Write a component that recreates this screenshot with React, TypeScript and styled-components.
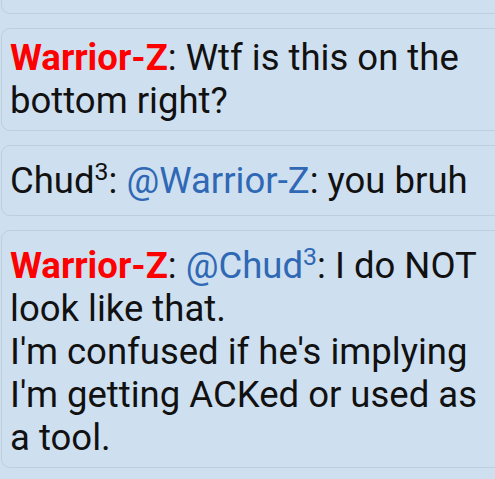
import React from 'react';
import styled, { createGlobalStyle } from 'styled-components';

const GlobalStyle = createGlobalStyle`
  html, body {
    margin: 0;
    padding: 0;
    background: #cedff0;
    overflow: hidden;
  }

  body {
    font-family: Roboto, 'Noto Sans', sans-serif;
  }
`;

const StyledChat = styled.div`
  display: flex;
  flex-direction: column;
  gap: 14px;
  padding-left: 1px;
  width: 505px;
`;

const Card = styled.div<{ $clipped?: boolean; $padBottom?: number }>`
  box-sizing: border-box;
  border: 1px solid #bfcedd;
  border-radius: 9px;
  background: #cedff0;
  padding: 7px 8px ${(props) => props.$padBottom ?? 8}px;
  font-size: 36.5px;
  line-height: normal;
  color: #111;

  ${(props) =>
    props.$clipped &&
    `
    height: 14px;
    padding: 0;
    border-top: none;
    border-top-left-radius: 0;
    border-top-right-radius: 0;
  `}
`;

const Author = styled.span<{ $admin?: boolean }>`
  color: ${(props) => (props.$admin ? '#ff0000' : '#111')};
  font-weight: ${(props) => (props.$admin ? 700 : 400)};
`;

const Mention = styled.span`
  color: #2f68b4;
`;

const Sup = styled.sup`
  font-size: 0.68em;
  line-height: 1.5;
`;

type Message = {
  author: React.ReactNode;
  admin?: boolean;
  mention?: React.ReactNode;
  lines: string[];
  padBottom?: number;
};

const chud = (
  <>
    Chud<Sup>3</Sup>
  </>
);

const messages: Message[] = [
  { author: 'Warrior-Z', admin: true, lines: ['Wtf is this on the bottom right?'] },
  { author: chud, mention: 'Warrior-Z', lines: ['you bruh'], padBottom: 13 },
  {
    author: 'Warrior-Z',
    admin: true,
    mention: chud,
    lines: [
      'I do NOT look like that.',
      "I'm confused if he's implying I'm getting ACKed or used as a tool.",
    ],
  },
];

const ChatMessage: React.FC<{ message: Message }> = ({ message }) => (
  <Card $padBottom={message.padBottom}>
    <Author $admin={message.admin}>{message.author}</Author>:{' '}
    {message.mention && (
      <>
        <Mention>@{message.mention}</Mention>:{' '}
      </>
    )}
    {message.lines.map((line, i) => (
      <React.Fragment key={i}>
        {i > 0 && <br />}
        {line}
      </React.Fragment>
    ))}
  </Card>
);

const App: React.FC = () => {
  return (
    <>
      <GlobalStyle />
      <StyledChat>
        <Card $clipped />
        {messages.map((m, i) => (
          <ChatMessage key={i} message={m} />
        ))}
      </StyledChat>
    </>
  );
};

export default App;
